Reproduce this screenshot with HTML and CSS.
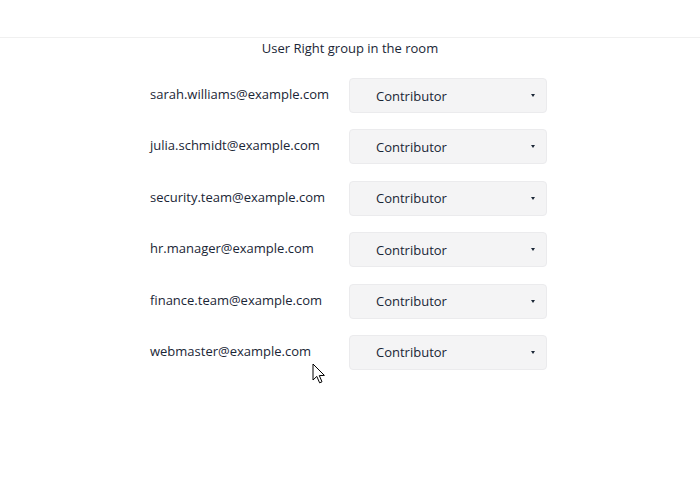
FILE: index.html
```html
<!DOCTYPE html>
<html>
<head>
<meta charset="utf-8">
<link rel="stylesheet" href="styles.css">
</head>
<body>
<div class="header"></div>
<div class="title">User Right group in the room</div>
<div class="list">
  <div class="row"><span class="email">sarah.williams@example.com</span><div class="select"><span>Contributor</span><span class="caret"></span></div></div>
  <div class="row"><span class="email">julia.schmidt@example.com</span><div class="select"><span>Contributor</span><span class="caret"></span></div></div>
  <div class="row"><span class="email">security.team@example.com</span><div class="select"><span>Contributor</span><span class="caret"></span></div></div>
  <div class="row"><span class="email">hr.manager@example.com</span><div class="select"><span>Contributor</span><span class="caret"></span></div></div>
  <div class="row"><span class="email">finance.team@example.com</span><div class="select"><span>Contributor</span><span class="caret"></span></div></div>
  <div class="row"><span class="email">webmaster@example.com</span><div class="select"><span>Contributor</span><span class="caret"></span></div></div>
</div>
<svg class="cursor" width="14" height="22" viewBox="0 0 14 22"><path d="M1 1 L1 17 L4.8 13.4 L7.6 19.8 L10 18.8 L7.3 12.6 L12.4 12.4 Z" fill="#fff" stroke="#000" stroke-width="1" stroke-linejoin="round"/></svg>
</body>
</html>
```
FILE: styles.css
```css
html, body {
  margin: 0;
  padding: 0;
  background: #fff;
}
body {
  font-family: "Open Sans", "Noto Sans", sans-serif;
  color: #1a2636;
  font-size: 13px;
  position: relative;
  width: 700px;
  height: 480px;
  overflow: hidden;
}
.header {
  height: 37px;
  border-bottom: 1px solid #f0f0f0;
}
.title {
  text-align: center;
  font-size: 13px;
  line-height: 18px;
  margin-top: 1px;
}
.list {
  width: 397px;
  padding-right: 3px;
  margin: 21px auto 0;
  display: flex;
  flex-direction: column;
  gap: 16.4px;
}
.row {
  display: flex;
  align-items: center;
  height: 35px;
}
.email {
  width: 199px;
  font-size: 13px;
  margin-top: -3px;
}
.select {
  width: 198px;
  height: 35px;
  box-sizing: border-box;
  background: #f4f4f5;
  border: 1px solid #ebebed;
  border-radius: 4px;
  display: flex;
  align-items: center;
  justify-content: space-between;
  padding: 0 11px 0 26px;
  font-size: 13px;
}
.caret {
  width: 0;
  height: 0;
  border-left: 2.5px solid transparent;
  border-right: 2.5px solid transparent;
  border-top: 3px solid #1a2636;
}
.cursor {
  position: absolute;
  left: 312px;
  top: 363px;
}
```
